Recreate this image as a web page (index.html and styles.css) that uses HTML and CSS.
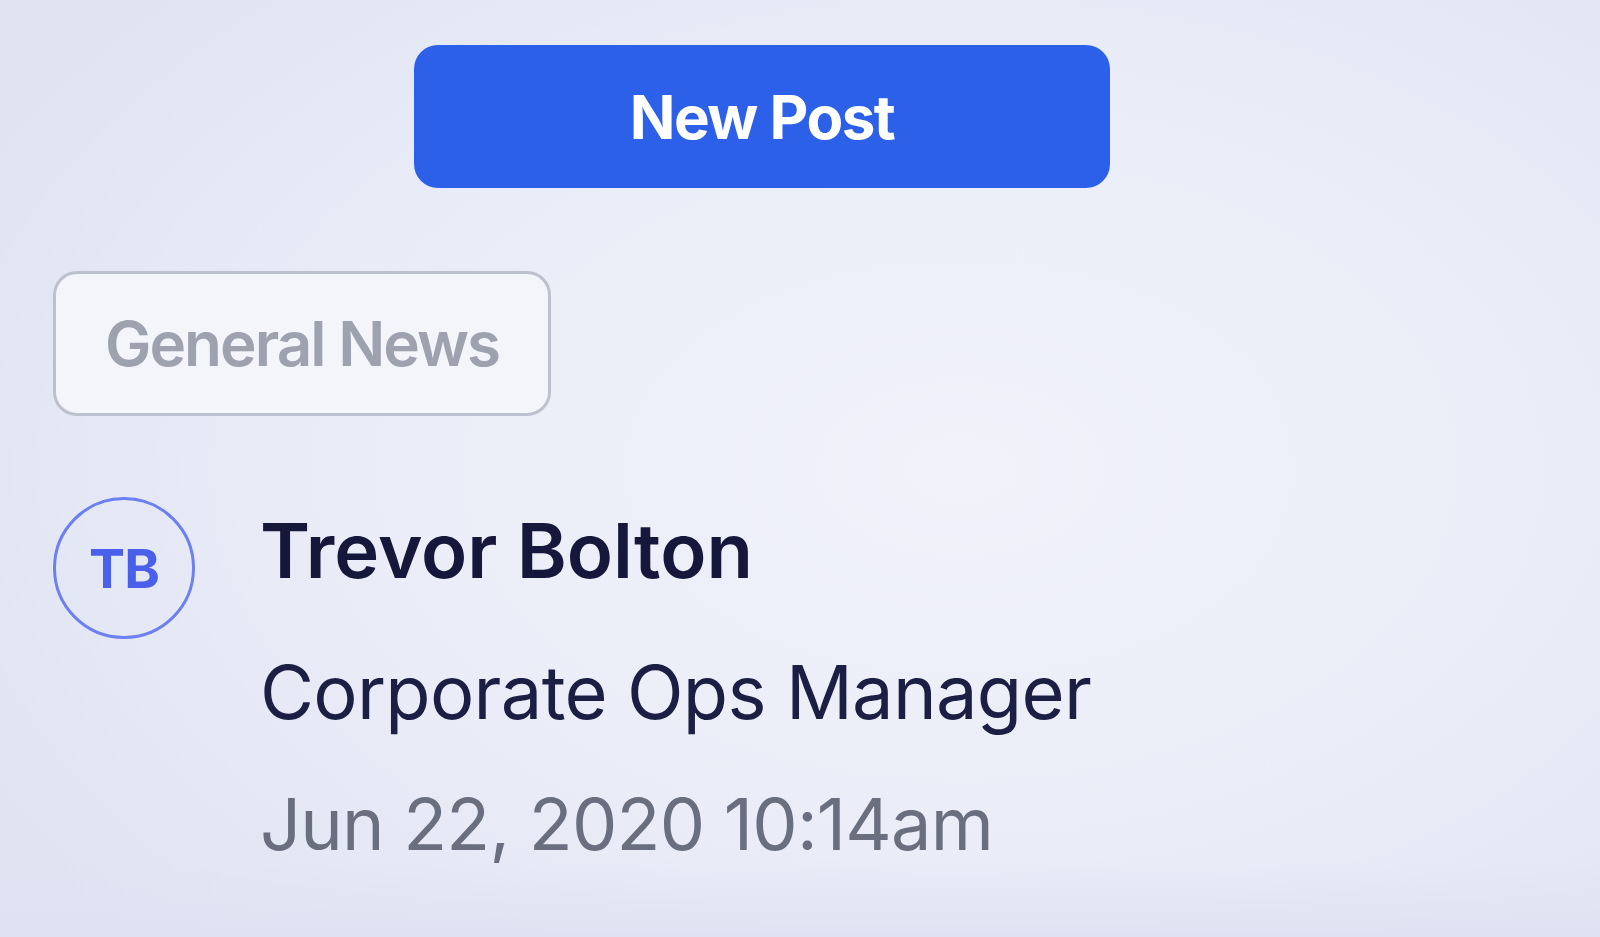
FILE: index.html
```html
<!DOCTYPE html>
<html lang="en">

<head>
  <meta charset="UTF-8" />
  <meta name="viewport" content="width=device-width, initial-scale=1.0" />
  <title>Post</title>
  <link rel="stylesheet" href="styles.css">
</head>

<body>
  <div class="page">
    <!-- Top action -->
    <button class="new-post">New Post</button>

    <!-- Category tag -->
    <div class="tag-row">
      <span class="tag">General News</span>
    </div>

    <!-- Author block -->
    <div class="author">
      <div class="avatar">TB</div>
      <div class="author-info">
        <div class="author-name">Trevor Bolton</div>
        <div class="author-role">Corporate Ops Manager</div>
        <div class="post-date">Jun 22, 2020 10:14am</div>
      </div>
    </div>
  </div>
</body>

</html>
```

FILE: styles.css
```css
/* General Styles */
html,
body {
  height: 100%;
}

body {
  margin: 0;
  font-family: Inter, "Noto Sans", Arial, sans-serif;
  background:
    linear-gradient(to bottom, rgba(222, 226, 242, 0) 92%, rgba(222, 226, 242, 1) 100%),
    radial-gradient(ellipse 70% 75% at 60% 50%, #f1f2fa 0%, #eaedf7 55%, #dfe3f2 100%);
  overflow: hidden;
}

.page {
  padding: 45px 0 0 53px;
}

/* New Post button */
.new-post {
  display: block;
  margin-left: 361px;
  width: 696px;
  height: 143px;
  border: none;
  border-radius: 24px;
  background-color: #2c60e8;
  color: #ffffff;
  font-family: inherit;
  font-size: 60px;
  font-weight: 700;
  letter-spacing: -1.5px;
  cursor: pointer;
}

/* Category tag */
.tag-row {
  margin-top: 83px;
}

.tag {
  display: inline-flex;
  align-items: center;
  justify-content: center;
  box-sizing: border-box;
  width: 498px;
  height: 145px;
  border: 3px solid #bdc1cd;
  border-radius: 24px;
  background-color: #f4f5fb;
  color: #9ea2ae;
  font-size: 62px;
  font-weight: 600;
  letter-spacing: -2px;
}

/* Author */
.author {
  display: flex;
  gap: 65px;
  margin-top: 81px;
}

.avatar {
  flex: none;
  box-sizing: border-box;
  width: 142px;
  height: 142px;
  border: 3px solid #6d80f2;
  border-radius: 50%;
  display: flex;
  align-items: center;
  justify-content: center;
  color: #4b60ea;
  font-size: 54px;
  font-weight: 700;
  letter-spacing: -1px;
}

.author-name {
  padding-top: 15px;
  font-size: 76px;
  line-height: 76px;
  font-weight: 600;
  color: #15183a;
}

.author-role {
  margin-top: 67px;
  font-size: 74px;
  line-height: 74px;
  letter-spacing: -0.7px;
  color: #1b1f44;
}

.post-date {
  margin-top: 59px;
  font-size: 72px;
  line-height: 72px;
  letter-spacing: -0.8px;
  color: #6a6f80;
}
```
